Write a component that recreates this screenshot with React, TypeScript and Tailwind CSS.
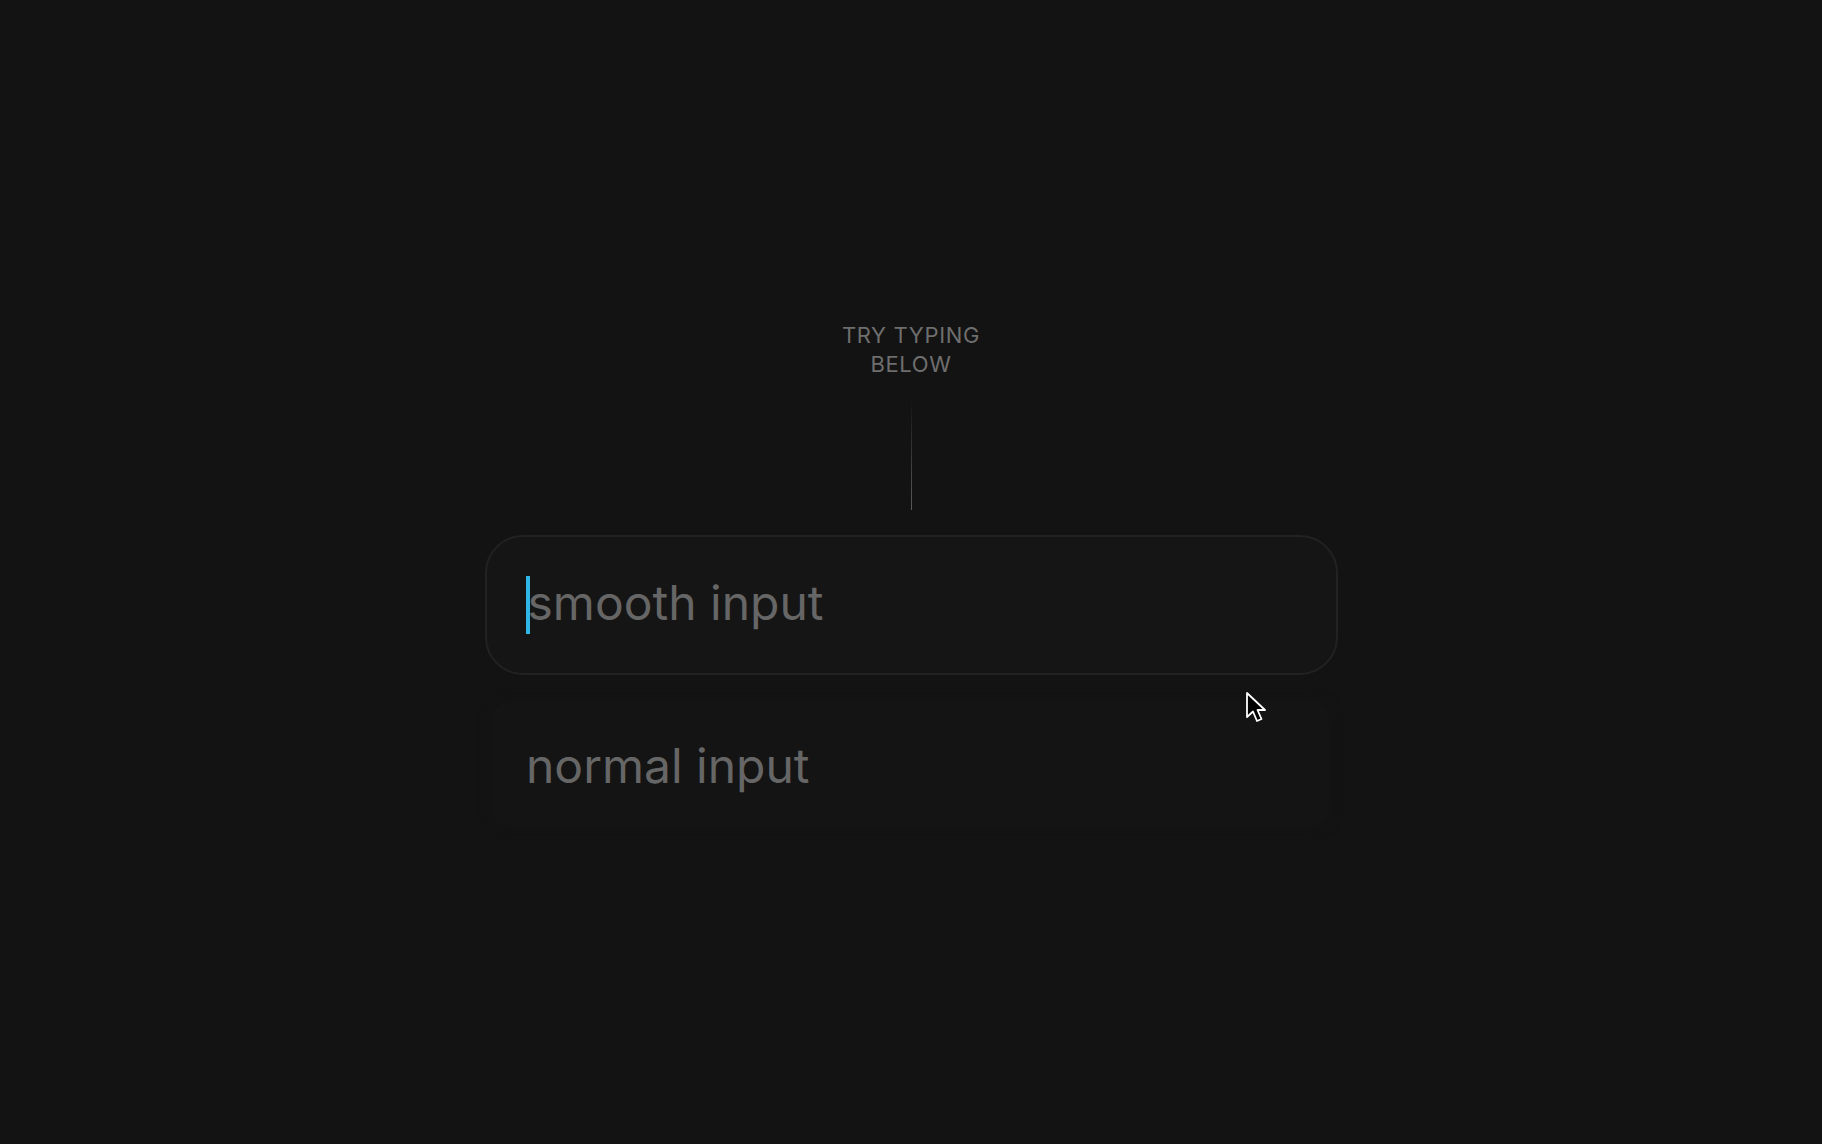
import React from "react";

function Pointer() {
  return (
    <svg width="24" height="36" viewBox="0 0 24 36" className="absolute left-[1244px] top-[690px]">
      <path
        d="M3 3 L3 27 L9 21.5 L13 31 L17.5 29 L13.5 20 L21 20 Z"
        fill="#000"
        stroke="#fff"
        strokeWidth="1.8"
        strokeLinejoin="round"
      />
    </svg>
  );
}

export default function App() {
  return (
    <div
      className="relative w-full h-[1144px] bg-[#131313] overflow-hidden"
      style={{ fontFamily: "Inter, 'Noto Sans', sans-serif" }}
    >
      <div className="flex flex-col items-center pt-[321px]">
        <div className="text-[22px] leading-[29px] text-[#6e6e6e] text-center tracking-[0.03em] w-[170px]">
          TRY TYPING BELOW
        </div>
        <div className="mt-[21px] w-px h-[110px] bg-gradient-to-b from-transparent via-[#383838] to-[#5a5a5a]" />
        <div className="mt-[25px] w-[853px] h-[140px] rounded-[38px] border-2 border-[#222222] bg-[#151515] flex items-center pl-[39px]">
          <div className="w-[4px] h-[58px] bg-[#2fb6e6]" />
          <span className="text-[48px] text-[#666666] leading-none pb-[4px] -ml-[2px]">smooth input</span>
        </div>
        <div className="mt-[27px] w-[836px] h-[124px] rounded-[14px] bg-[#141414] shadow-[0_0_10px_4px_#141414] flex items-center pl-[33px]">
          <span className="text-[48px] text-[#666666] leading-none pt-[4px]">normal input</span>
        </div>
      </div>
      <Pointer />
    </div>
  );
}
